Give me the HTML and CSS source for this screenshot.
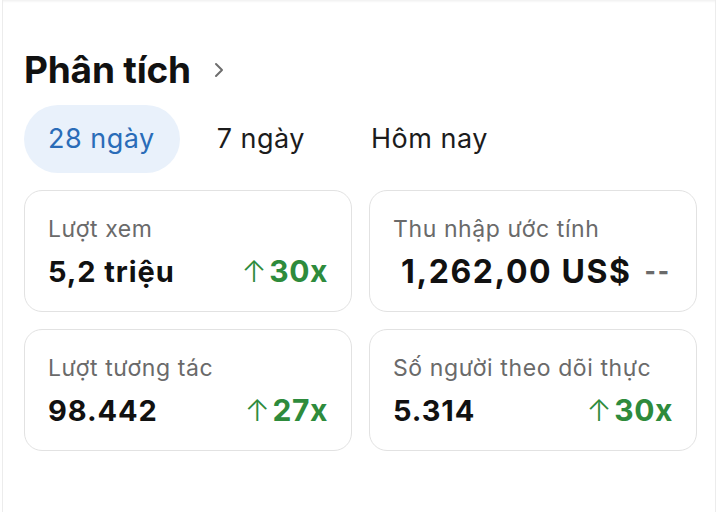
FILE: index.html
```html
<!DOCTYPE html>
<html lang="vi">

<head>
    <meta charset="UTF-8">
    <meta name="viewport" content="width=device-width, initial-scale=1.0">
    <title>Phân tích</title>
    <link rel="stylesheet" href="styles.css">
</head>

<body>
    <div class="panel">
        <div class="header">
            <h2>Phân tích</h2>
            <svg class="chevron" width="12" height="18" viewBox="0 0 12 18">
                <path d="M3 3 L9 9 L3 15" fill="none" stroke="#6e6e6e" stroke-width="2" stroke-linecap="round" stroke-linejoin="round" />
            </svg>
        </div>

        <div class="tabs">
            <div class="tab active">28 ngày</div>
            <div class="tab">7 ngày</div>
            <div class="tab">Hôm nay</div>
        </div>

        <div class="grid">
            <div class="card">
                <div class="label">Lượt xem</div>
                <div class="row">
                    <span class="value">5,2 triệu</span>
                    <span class="change"><span class="arrow">↑</span>30x</span>
                </div>
            </div>
            <div class="card">
                <div class="label">Thu nhập ước tính</div>
                <div class="row">
                    <span class="value big">1,262,00 US$</span>
                    <span class="none">--</span>
                </div>
            </div>
            <div class="card">
                <div class="label">Lượt tương tác</div>
                <div class="row">
                    <span class="value">98.442</span>
                    <span class="change"><span class="arrow">↑</span>27x</span>
                </div>
            </div>
            <div class="card">
                <div class="label">Số người theo dõi thực</div>
                <div class="row">
                    <span class="value">5.314</span>
                    <span class="change"><span class="arrow">↑</span>30x</span>
                </div>
            </div>
        </div>
    </div>
</body>

</html>
```

FILE: styles.css
```css
body {
    margin: 0;
    background: #fff;
    font-family: Inter, "Noto Sans", sans-serif;
    color: #111;
}

.panel {
    height: 512px;
    box-sizing: border-box;
    margin: 0 4px 0 2px;
    padding: 44px 20px 0 21px;
    border-left: 1px solid #ececec;
    border-right: 1px solid #ececec;
    box-shadow: inset 0 3px 3px -2px rgba(0, 0, 0, 0.08);
}

.header {
    display: flex;
    align-items: center;
    gap: 22px;
    height: 50px;
}

.header h2 {
    margin: 0;
    font-size: 37px;
    font-weight: 700;
    letter-spacing: -0.2px;
}

.chevron {
    margin-top: 2px;
}

.tabs {
    display: flex;
    gap: 8px;
    margin-top: 11px;
}

.tab {
    height: 68px;
    line-height: 68px;
    padding: 0 29px;
    border-radius: 34px;
    font-size: 27px;
    color: #1c1c1c;
    letter-spacing: 0.5px;
}

.tab.active {
    background: #e9f1fb;
    color: #2a6cb8;
    padding: 0 25px 0 24px;
}

.grid {
    display: grid;
    grid-template-columns: 328px 328px;
    gap: 17px;
    margin-top: 17px;
}

.card {
    height: 122px;
    box-sizing: border-box;
    border: 1.5px solid #e2e2e2;
    border-radius: 18px;
    padding: 24px 23px 0 23px;
}

.label {
    font-size: 23px;
    color: #6a6a6a;
    line-height: 28px;
    letter-spacing: 0.6px;
}

.row {
    display: flex;
    justify-content: space-between;
    align-items: center;
    margin-top: 10px;
    height: 36px;
}

.value {
    font-size: 29px;
    font-weight: 700;
    color: #111;
    letter-spacing: 0.9px;
}

.value.big {
    font-size: 32px;
    margin-left: 8px;
    letter-spacing: 1.6px;
    white-space: nowrap;
}

.change {
    font-size: 30px;
    font-weight: 700;
    color: #2e8b3c;
    letter-spacing: 0.6px;
}

.arrow {
    font-weight: 300;
    margin-right: 2px;
}

.none {
    font-size: 24px;
    font-weight: 800;
    color: #6a6a6a;
    margin-right: 2px;
    letter-spacing: 2px;
}
```
